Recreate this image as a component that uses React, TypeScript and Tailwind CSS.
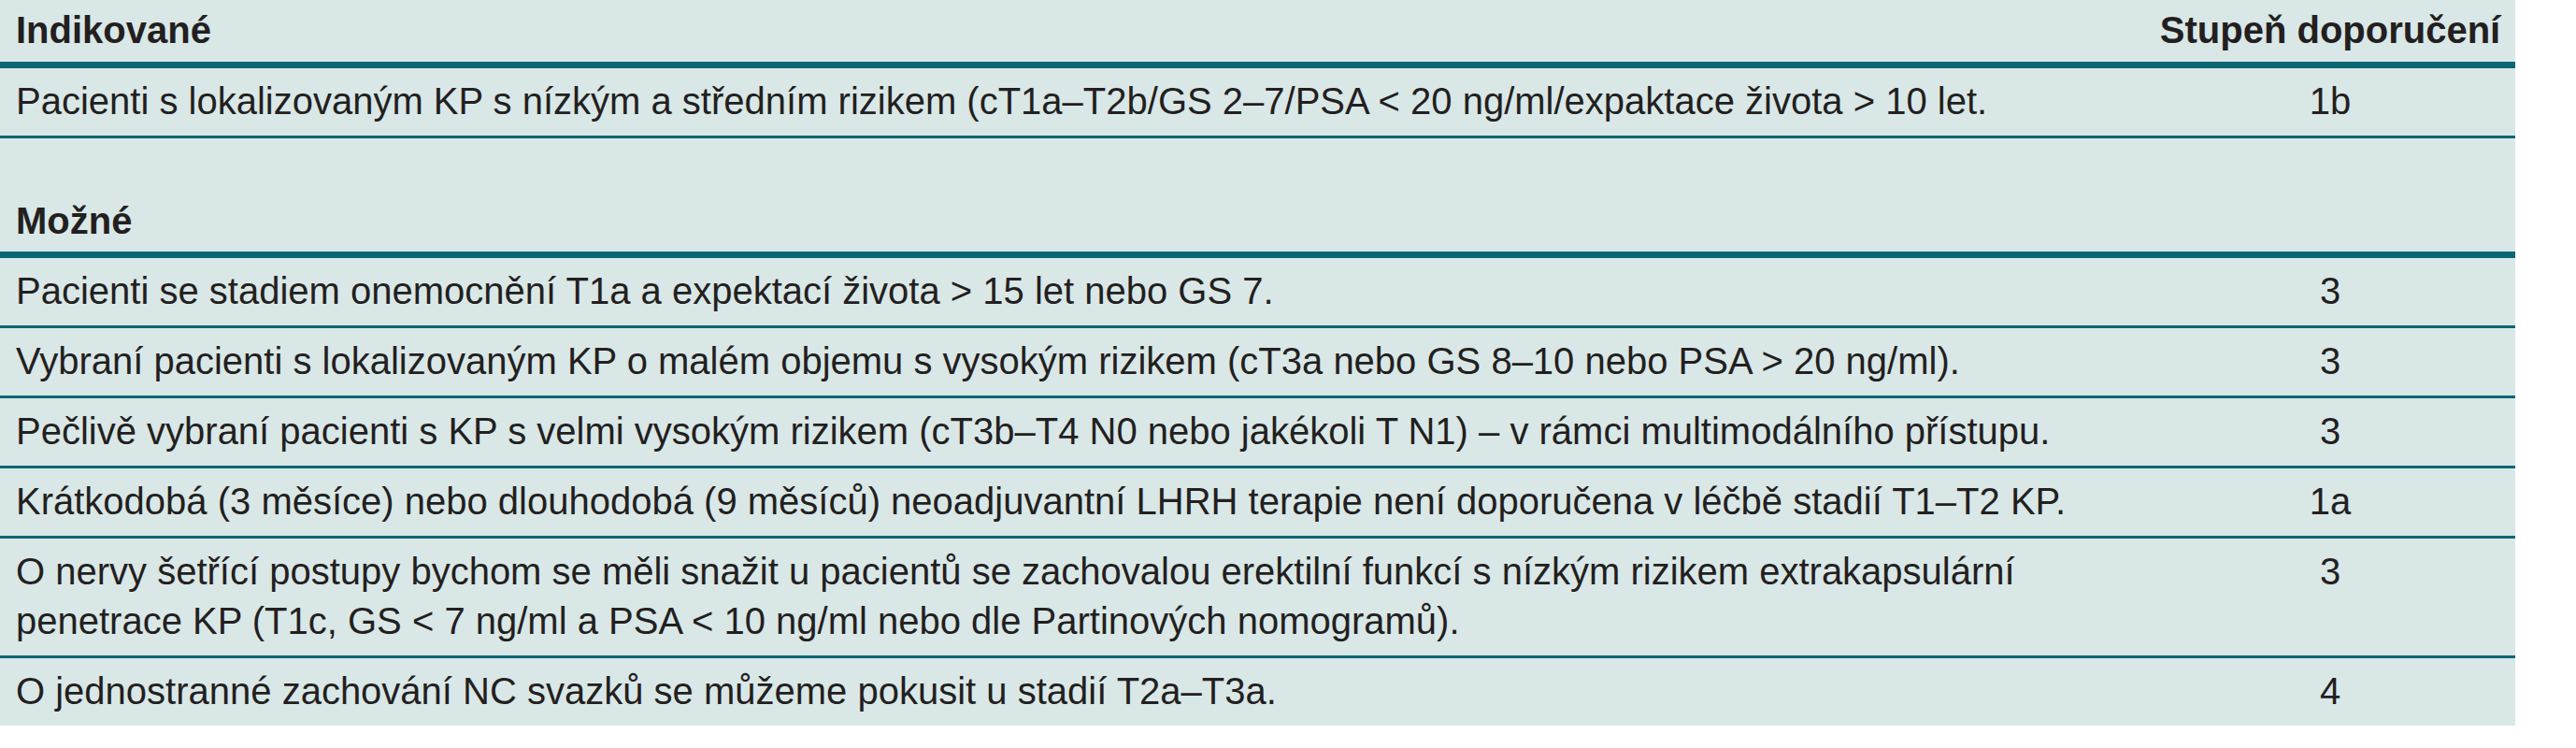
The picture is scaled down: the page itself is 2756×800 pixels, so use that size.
type Row = {
  text: React.ReactNode;
  grade: string;
  last?: boolean;
};

const indicated: Row[] = [
  {
    text: 'Pacienti s lokalizovaným KP s nízkým a středním rizikem (cT1a–T2b/GS 2–7/PSA < 20 ng/ml/expaktace života > 10 let.',
    grade: '1b',
  },
];

const possible: Row[] = [
  {
    text: 'Pacienti se stadiem onemocnění T1a a expektací života > 15 let nebo GS 7.',
    grade: '3',
  },
  {
    text: 'Vybraní pacienti s lokalizovaným KP o malém objemu s vysokým rizikem (cT3a nebo GS 8–10 nebo PSA > 20 ng/ml).',
    grade: '3',
  },
  {
    text: 'Pečlivě vybraní pacienti s KP s velmi vysokým rizikem (cT3b–T4 N0 nebo jakékoli T N1) – v rámci multimodálního přístupu.',
    grade: '3',
  },
  {
    text: 'Krátkodobá (3 měsíce) nebo dlouhodobá (9 měsíců) neoadjuvantní LHRH terapie není doporučena v léčbě stadií T1–T2 KP.',
    grade: '1a',
  },
  {
    text: (
      <>
        O nervy šetřící postupy bychom se měli snažit u pacientů se zachovalou erektilní funkcí s nízkým rizikem extrakapsulární
        <br />
        penetrace KP (T1c, GS &lt; 7 ng/ml a PSA &lt; 10 ng/ml nebo dle Partinových nomogramů).
      </>
    ),
    grade: '3',
  },
  {
    text: 'O jednostranné zachování NC svazků se můžeme pokusit u stadií T2a–T3a.',
    grade: '4',
    last: true,
  },
];

const BodyRow = ({ row }: { row: Row }) => (
  <div className={`flex ${row.last ? '' : 'border-b-[3px] border-[#0b6673]'}`}>
    <div className="flex-1 pl-[17px] pt-[9px] pb-[10px]">{row.text}</div>
    <div className="w-[396px] pt-[9px] pb-[10px] text-center">{row.grade}</div>
  </div>
);

export default function App() {
  return (
    <div className="min-h-screen bg-white">
      <div
        className="w-[2691px] bg-[#d9e7e7] text-[40px] leading-[53px] text-[#231f20]"
        style={{ fontFamily: '"Liberation Sans", Arial, sans-serif' }}
      >
        {/* Indikované */}
        <div className="flex border-b-[7px] border-[#0b6673] font-bold">
          <div className="flex-1 pl-[17px] pt-[6px] pb-[7px]">Indikované</div>
          <div className="w-[396px] pt-[6px] pb-[7px] text-center">Stupeň doporučení</div>
        </div>
        {indicated.map((row, i) => (
          <BodyRow key={i} row={row} />
        ))}

        {/* Možné */}
        <div className="flex border-b-[7px] border-[#0b6673] font-bold">
          <div className="flex-1 pl-[17px] pt-[62px] pb-[6px]">Možné</div>
          <div className="w-[396px]" />
        </div>
        {possible.map((row, i) => (
          <BodyRow key={i} row={row} />
        ))}
      </div>
    </div>
  );
}
